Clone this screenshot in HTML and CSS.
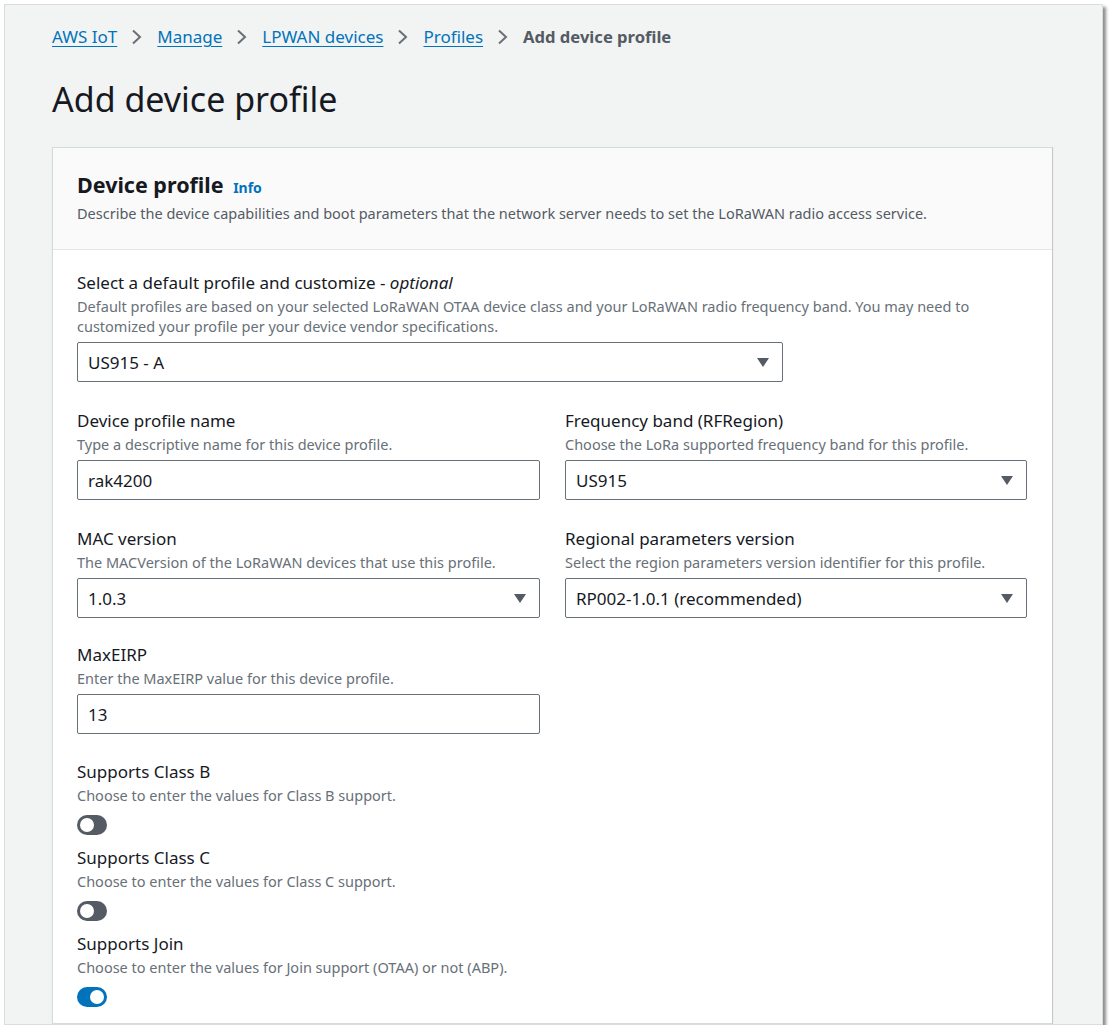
FILE: index.html
```html
<!DOCTYPE html>
<html lang="en">
<head>
<meta charset="utf-8">
<title>Add device profile</title>
<link rel="stylesheet" href="styles.css">
</head>
<body>
<div class="frame">
  <nav class="breadcrumb">
    <a href="#">AWS IoT</a>
    <svg class="chev" viewBox="0 0 12 16"><path d="M2 1.5 L9 8 L2 14.5" /></svg>
    <a href="#">Manage</a>
    <svg class="chev" viewBox="0 0 12 16"><path d="M2 1.5 L9 8 L2 14.5" /></svg>
    <a href="#">LPWAN devices</a>
    <svg class="chev" viewBox="0 0 12 16"><path d="M2 1.5 L9 8 L2 14.5" /></svg>
    <a href="#">Profiles</a>
    <svg class="chev" viewBox="0 0 12 16"><path d="M2 1.5 L9 8 L2 14.5" /></svg>
    <span class="current">Add device profile</span>
  </nav>
  <h1 class="page-title">Add device profile</h1>

  <section class="card">
    <header class="card-header">
      <h2>Device profile <a href="#" class="info">Info</a></h2>
      <p>Describe the device capabilities and boot parameters that the network server needs to set the LoRaWAN radio access service.</p>
    </header>
    <div class="card-body">
      <div class="field wide">
        <div class="label">Select a default profile and customize - <i>optional</i></div>
        <div class="desc">Default profiles are based on your selected LoRaWAN OTAA device class and your LoRaWAN radio frequency band. You may need to customized your profile per your device vendor specifications.</div>
        <div class="select"><span>US915 - A</span><span class="caret"></span></div>
      </div>

      <div class="row">
        <div class="field">
          <div class="label">Device profile name</div>
          <div class="desc">Type a descriptive name for this device profile.</div>
          <div class="input">rak4200</div>
        </div>
        <div class="field">
          <div class="label">Frequency band (RFRegion)</div>
          <div class="desc">Choose the LoRa supported frequency band for this profile.</div>
          <div class="select"><span>US915</span><span class="caret"></span></div>
        </div>
      </div>

      <div class="row compact">
        <div class="field">
          <div class="label">MAC version</div>
          <div class="desc">The MACVersion of the LoRaWAN devices that use this profile.</div>
          <div class="select"><span>1.0.3</span><span class="caret"></span></div>
        </div>
        <div class="field">
          <div class="label">Regional parameters version</div>
          <div class="desc">Select the region parameters version identifier for this profile.</div>
          <div class="select"><span>RP002-1.0.1 (recommended)</span><span class="caret"></span></div>
        </div>
      </div>

      <div class="row last">
        <div class="field">
          <div class="label">MaxEIRP</div>
          <div class="desc">Enter the MaxEIRP value for this device profile.</div>
          <div class="input">13</div>
        </div>
      </div>

      <div class="field toggle-field">
        <div class="label">Supports Class B</div>
        <div class="desc">Choose to enter the values for Class B support.</div>
        <span class="toggle"></span>
      </div>
      <div class="field toggle-field">
        <div class="label">Supports Class C</div>
        <div class="desc">Choose to enter the values for Class C support.</div>
        <span class="toggle"></span>
      </div>
      <div class="field toggle-field">
        <div class="label">Supports Join</div>
        <div class="desc">Choose to enter the values for Join support (OTAA) or not (ABP).</div>
        <span class="toggle on"></span>
      </div>
    </div>
  </section>
</div>
</body>
</html>
```
FILE: styles.css
```css
* { box-sizing: border-box; }
html, body { margin: 0; padding: 0; background: #ffffff; }
body {
  font-family: "Noto Sans", "Open Sans", "Liberation Sans", sans-serif;
  color: #16191f;
}
.frame {
  margin: 4px 0 0 4px;
  width: 1099px;
  height: 1021px;
  background: #f2f3f3;
  border: 1px solid #dcdcdc;
  box-shadow: 3px 3px 3px rgba(0, 0, 0, 0.45);
  padding: 20px 0 0 47px;
  overflow: hidden;
  display: flex;
  flex-direction: column;
}
.breadcrumb {
  display: flex;
  align-items: center;
  height: 24px;
  font-size: 17px;
  line-height: 24px;
}
.breadcrumb a {
  color: #0073bb;
  text-decoration: underline;
  text-underline-offset: 3px;
}
.chev {
  width: 12px;
  height: 16px;
  margin: 0 14px 0 14px;
  fill: none;
  stroke: #687078;
  stroke-width: 2;
}
.current { color: #545b64; font-weight: 700; font-size: 16.6px; }
.page-title {
  margin: 30px 0 0 0;
  font-size: 34px;
  line-height: 40px;
  font-weight: 400;
  color: #16191f;
}
.card {
  margin-top: 28px;
  width: 1001px;
  flex: 1;
  background: #ffffff;
  border: 1px solid #d5dbdb;
  border-right-color: #c6c6c6;
  box-shadow: 0 1px 1px rgba(0, 28, 36, 0.1);
}
.card-header {
  background: #fafafa;
  border-bottom: 1px solid #e4e6e6;
  padding: 23px 24px 26px 24px;
}
.card-header h2 {
  margin: 0;
  font-size: 21.5px;
  line-height: 28px;
  font-weight: 700;
}
.info {
  color: #0073bb;
  font-size: 14px;
  font-weight: 700;
  text-decoration: none;
  margin-left: 4px;
}
.card-header p {
  margin: 1px 0 0 0;
  font-size: 14.5px;
  line-height: 20px;
  color: #545b64;
}
.card-body {
  padding: 22px 24px 0 24px;
}
.field { margin-bottom: 28px; }
.field.wide .select { width: 706px; }
.label {
  font-size: 17px;
  line-height: 22px;
  margin-bottom: 2px;
}
.desc {
  font-size: 14.5px;
  line-height: 20px;
  color: #687078;
  margin-bottom: 6px;
}
.row {
  display: grid;
  grid-template-columns: 463px 462px;
  column-gap: 25px;
}
.row .field { margin-bottom: 28px; }
.row.compact .field { margin-bottom: 26px; }
.row.last .field { margin-bottom: 27px; }
.input, .select {
  height: 40px;
  border: 1px solid #687078;
  border-radius: 2px;
  background: #ffffff;
  padding: 0 11px 0 10px;
  font-size: 17px;
  display: flex;
  align-items: center;
  justify-content: space-between;
}
.caret {
  width: 0;
  height: 0;
  border-left: 6.5px solid transparent;
  border-right: 6.5px solid transparent;
  border-top: 9px solid #545b64;
  margin-right: 2px;
}
.toggle-field { margin-bottom: 12px; }
.toggle-field .desc { margin-bottom: 10px; }
.toggle {
  display: block;
  position: relative;
  width: 30px;
  height: 20px;
  border-radius: 10px;
  background: #545b64;
}
.toggle::after {
  content: "";
  position: absolute;
  top: 3px;
  left: 3px;
  width: 14px;
  height: 14px;
  border-radius: 50%;
  background: #ffffff;
}
.toggle.on { background: #0073bb; }
.toggle.on::after { left: 13px; }
```
